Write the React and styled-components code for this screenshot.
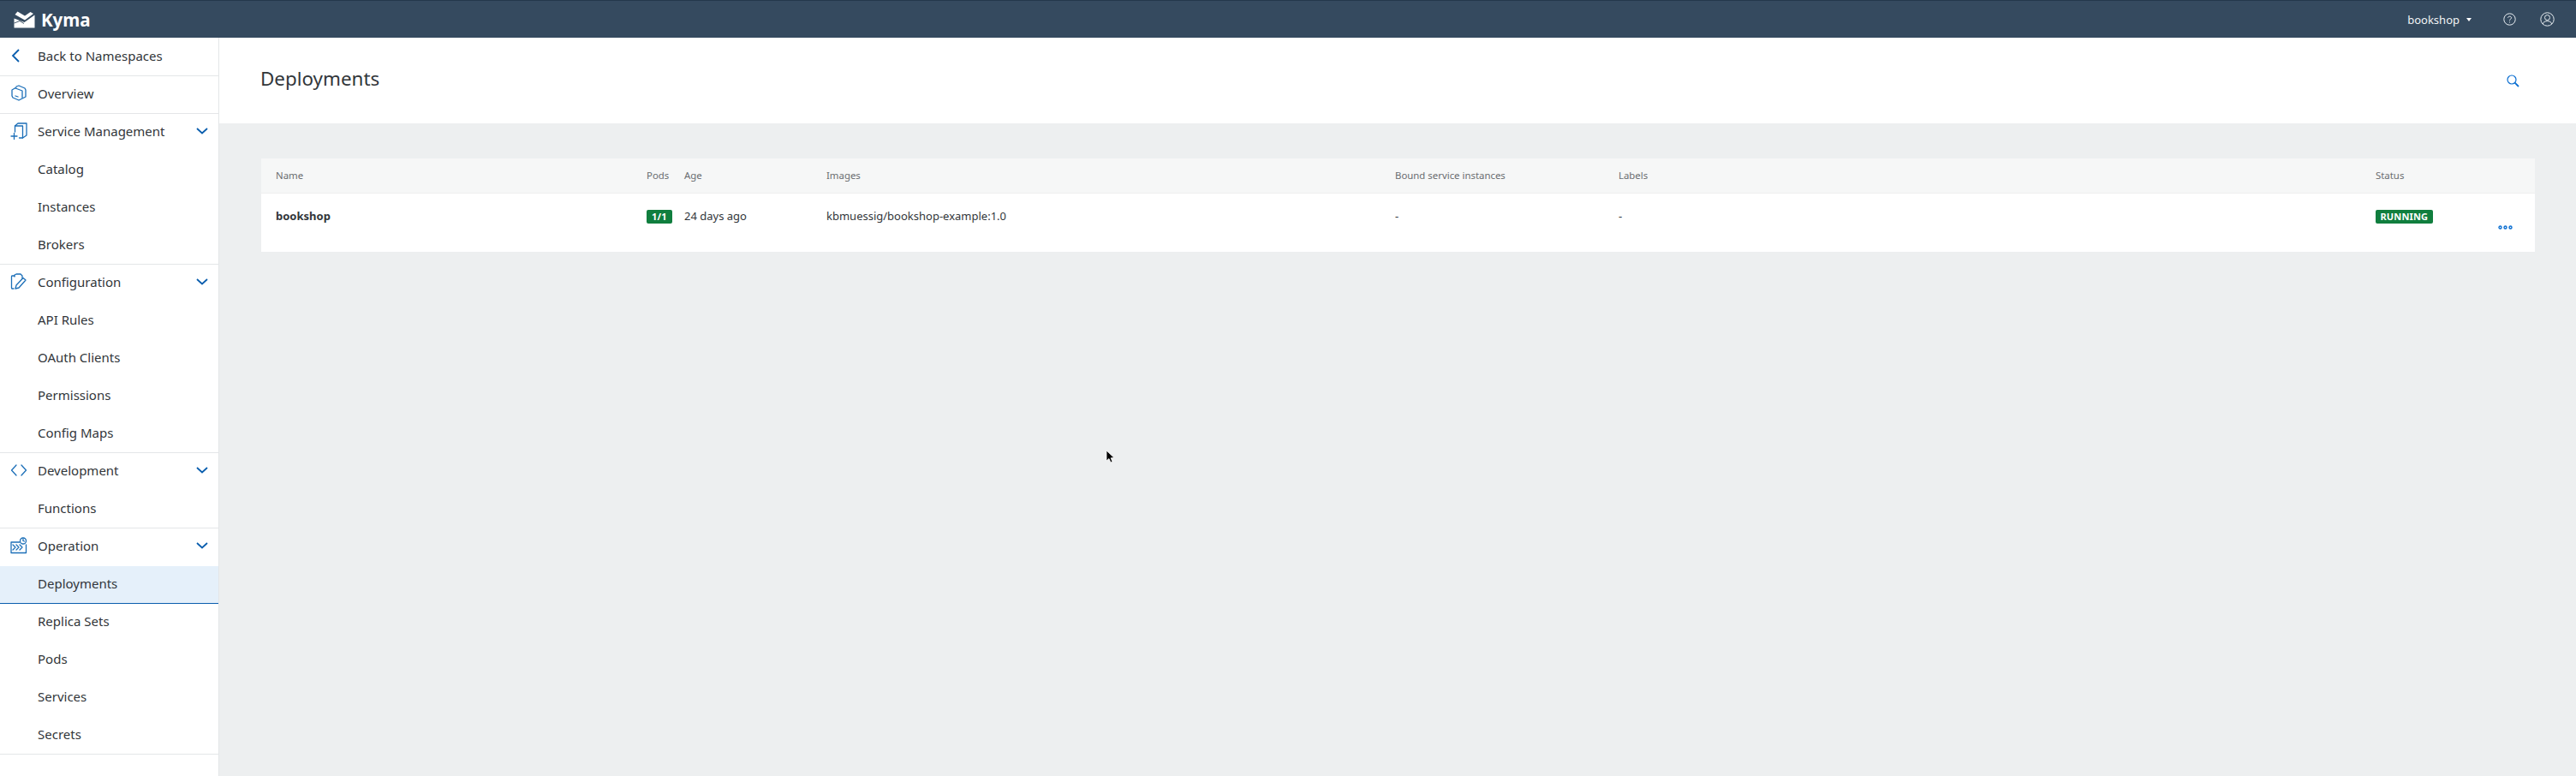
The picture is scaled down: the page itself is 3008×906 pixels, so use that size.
import React from "react";
import styled, { createGlobalStyle } from "styled-components";

const Global = createGlobalStyle`
  html, body { margin: 0; padding: 0; height: 100%; overflow: hidden; background: #edeff0; }
  * { box-sizing: border-box; }
  body { font-family: "Noto Sans", "Open Sans", Arial, sans-serif; color: #32363a; }
`;

const Page = styled.div`
  position: relative;
  display: flex;
  flex-direction: column;
  width: 3008px;
  height: 906px;
  overflow: hidden;
`;
const Shell = styled.header`
  flex: 0 0 44px;
  display: flex;
  align-items: center;
  padding-left: 16px;
  background: #354a5f;
  border-top: 1px solid #24384b;
  color: #fff;
`;
const Brand = styled.div`
  display: flex;
  align-items: center;
  gap: 7px;
  font-size: 20.5px;
  font-weight: 700;
`;
const ShellActions = styled.div`
  margin-left: auto;
  display: flex;
  align-items: center;
  padding-right: 25px;
`;
const NamespaceName = styled.span`
  font-size: 13px;
  color: #f0f3f5;
`;
const Caret = styled.span`
  width: 0;
  height: 0;
  margin: 0 37px 0 8px;
  border-left: 3.5px solid transparent;
  border-right: 3.5px solid transparent;
  border-top: 4px solid #fff;
`;
const ShellIcon = styled.span`
  display: flex;
  margin-left: ${(p) => p.$gap || 0}px;
`;
const Body = styled.div`
  flex: 1;
  display: flex;
  min-height: 0;
`;
const Sidebar = styled.nav`
  flex: 0 0 256px;
  background: #fff;
  border-right: 1px solid #e4e6e8;
  padding-top: 1px;
`;
const NavRow = styled.div`
  height: 44px;
  display: flex;
  align-items: center;
  padding: 0 0 4px 44px;
  position: relative;
  font-size: 15px;
  color: #32363a;
  background: ${(p) => (p.$active ? "#e5f0fa" : "transparent")};
  border-bottom: 1px solid
    ${(p) => (p.$active ? "#0a5eae" : p.$last ? "#e4e6e8" : "transparent")};
`;
const NavIcon = styled.span`
  position: absolute;
  left: 12px;
  top: calc(50% - 2px);
  transform: translateY(-50%);
  display: flex;
`;
const Chevron = styled.span`
  position: absolute;
  right: 12px;
  top: calc(50% - 2px);
  transform: translateY(-50%);
  display: flex;
`;
const Main = styled.main`
  flex: 1;
  display: flex;
  flex-direction: column;
`;
const PageHead = styled.div`
  height: 100px;
  display: flex;
  align-items: center;
  justify-content: space-between;
  padding: 0 66px 0 48px;
  background: #fff;
`;
const Title = styled.h1`
  margin: 0 0 6px;
  font-size: 22.4px;
  font-weight: 400;
  color: #32363a;
`;
const Content = styled.section`
  padding: 41px 48px 0 49px;
`;
const Table = styled.div`
  background: #fff;
  width: 2655px;
`;
const Grid = styled.div`
  display: grid;
  grid-template-columns: 433px 44px 166px 664px 261px 884px 1fr;
  padding-left: 17px;
`;
const HeadRow = styled(Grid)`
  height: 41px;
  align-items: center;
  background: #f6f7f7;
  border-bottom: 1px solid #eeeeef;
  font-size: 11.4px;
  color: #6a6d70;
`;
const DataRow = styled(Grid)`
  height: 68px;
  padding-top: 17px;
  position: relative;
  font-size: 13px;
  color: #32363a;
`;
const Strong = styled.span`
  font-weight: 700;
`;
const Badge = styled.span`
  display: inline-block;
  height: 16px;
  line-height: 16px;
  padding: 0 ${(p) => p.$pad}px;
  border-radius: 2px;
  background: #107e3e;
  color: #fff;
  font-size: 11px;
  font-weight: 700;
  letter-spacing: 0.15px;
`;
const Cell = styled.div`
  line-height: 18px;
  white-space: nowrap;
`;
const Dots = styled.span`
  position: absolute;
  right: 26px;
  top: 37px;
  display: flex;
`;
const Cursor = styled.span`
  position: absolute;
  left: 1291px;
  top: 525px;
  display: flex;
`;

const Blue = "#0a5eae";
const stroke = { fill: "none", stroke: "#1c6fb8", strokeWidth: 1.3, strokeLinejoin: "round", strokeLinecap: "round" };

const Logo = () => (
  <svg width="25" height="20" viewBox="0 0 25 20">
    <path fill="#fff" d="M0.5 8.5 L12.5 13 L24.5 4.5 V19.5 H0.5 Z" />
    <path fill="#fff" d="M1.5 4 L4.5 0.5 L13 5.5 L19.5 1 L23 3 L13 10.5 Z" />
    <path fill="none" stroke="#354a5f" strokeWidth="0.9" d="M0.5 14 L7 11.5 L12 14.5" />
  </svg>
);
const BackChevron = () => (
  <svg width="12" height="18" viewBox="0 0 12 18">
    <path d="M10 2 L3 9 L10 16" fill="none" stroke={Blue} strokeWidth="1.8" />
  </svg>
);
const Down = () => (
  <svg width="14" height="9" viewBox="0 0 14 9">
    <path d="M1 1.5 L7 7 L13 1.5" fill="none" stroke={Blue} strokeWidth="1.8" />
  </svg>
);
const Overview = () => (
  <svg width="20" height="20" viewBox="0 0 20 20" {...stroke}>
    <path d="M7 2 L10 1 L17 4 L18 6 V14 L10 18 L3 15 L2 13 V6 L7 3" />
    <path d="M6 4 L14 7 V15" />
    <path d="M6 13 L9 14" />
  </svg>
);
const Service = () => (
  <svg width="20" height="22" viewBox="0 0 20 22" {...stroke}>
    <path d="M5.5 12 V5 H14.5 V19 H10.5" />
    <path d="M5.5 5 L9 2 H19 V16 L14.5 19" />
    <path d="M1 17 H8 M4.5 13.5 V20.5" />
  </svg>
);
const Config = () => (
  <svg width="20" height="20" viewBox="0 0 20 20" {...stroke}>
    <path d="M5 3 H2 Q1.5 3 1.5 4 V17 Q1.5 18 2 18 H4" />
    <path d="M5 4 V2 L7 1 H12 L14 3 V6" />
    <path d="M6 18 L7 14 L15 5.5 L18 8 L10 17 Z" />
  </svg>
);
const Code = () => (
  <svg width="20" height="16" viewBox="0 0 20 16" {...stroke}>
    <path d="M7 2 L1.5 8 L7 14" />
    <path d="M13 2 L18.5 8 L13 14" />
  </svg>
);
const Operation = () => (
  <svg width="20" height="20" viewBox="0 0 20 20" {...stroke}>
    <path d="M11 6 H1 V18.5 H18.5 V9" />
    <path d="M3 9 L6 12 L3 15 M7 9 L10 12 L7 15 M11 9 L14 12 L11 15" />
    <circle cx="15" cy="4.5" r="3.5" />
    <path d="M15 2.5 V4.5 L16.5 5" />
  </svg>
);
const Help = () => (
  <svg width="15" height="15" viewBox="0 0 15 15" fill="none" stroke="#e8edf1" strokeWidth="1">
    <circle cx="7.5" cy="7.5" r="6.7" />
    <path d="M5.5 5.8 C5.5 3.6 9.6 3.6 9.6 5.8 C9.6 7.2 7.5 7.2 7.5 9" />
    <path d="M7.5 10.4 V11.4" />
  </svg>
);
const User = () => (
  <svg width="17" height="17" viewBox="0 0 17 17" fill="none" stroke="#e8edf1" strokeWidth="1">
    <circle cx="8.5" cy="8.5" r="7.7" />
    <circle cx="8.5" cy="6.5" r="3" />
    <path d="M3.3 14 C4 9.5 13 9.5 13.7 14" />
  </svg>
);
const Search = () => (
  <svg width="15" height="15" viewBox="0 0 15 15" fill="none" stroke="#0a6ed1" strokeWidth="1.2">
    <circle cx="6" cy="6" r="5" />
    <path d="M9.6 9.6 L14 14" strokeWidth="1.8" />
  </svg>
);
const More = () => (
  <svg width="17" height="5" viewBox="0 0 17 5" fill="none" stroke="#0a6ed1" strokeWidth="1.4">
    <circle cx="2.5" cy="2.5" r="1.5" />
    <circle cx="8.5" cy="2.5" r="1.5" />
    <circle cx="14.5" cy="2.5" r="1.5" />
  </svg>
);
const Arrow = () => (
  <svg width="12" height="17" viewBox="0 0 12 17">
    <path d="M1 1 V13 L4 10.5 L6 15 L8 14 L6.2 9.8 L10 9.5 Z" fill="#000" stroke="#fff" strokeWidth="0.8" />
  </svg>
);

const nav = [
  { label: "Back to Namespaces", icon: <BackChevron />, last: true },
  { label: "Overview", icon: <Overview />, last: true },
  { label: "Service Management", icon: <Service />, open: true },
  { label: "Catalog" },
  { label: "Instances" },
  { label: "Brokers", last: true },
  { label: "Configuration", icon: <Config />, open: true },
  { label: "API Rules" },
  { label: "OAuth Clients" },
  { label: "Permissions" },
  { label: "Config Maps", last: true },
  { label: "Development", icon: <Code />, open: true },
  { label: "Functions", last: true },
  { label: "Operation", icon: <Operation />, open: true },
  { label: "Deployments", active: true },
  { label: "Replica Sets" },
  { label: "Pods" },
  { label: "Services" },
  { label: "Secrets", last: true },
];

export default function App() {
  return (
    <Page>
      <Global />
      <Shell>
        <Brand>
          <Logo />
          <span>Kyma</span>
        </Brand>
        <ShellActions>
          <NamespaceName>bookshop</NamespaceName>
          <Caret />
          <ShellIcon><Help /></ShellIcon>
          <ShellIcon $gap={28}><User /></ShellIcon>
        </ShellActions>
      </Shell>
      <Body>
        <Sidebar>
          {nav.map((n) => (
            <NavRow key={n.label} $last={n.last} $active={n.active}>
              {n.icon && <NavIcon>{n.icon}</NavIcon>}
              {n.label}
              {n.open && <Chevron><Down /></Chevron>}
            </NavRow>
          ))}
        </Sidebar>
        <Main>
          <PageHead>
            <Title>Deployments</Title>
            <Search />
          </PageHead>
          <Content>
            <Table>
              <HeadRow>
                <Cell>Name</Cell>
                <Cell>Pods</Cell>
                <Cell>Age</Cell>
                <Cell>Images</Cell>
                <Cell>Bound service instances</Cell>
                <Cell>Labels</Cell>
                <Cell>Status</Cell>
              </HeadRow>
              <DataRow>
                <Cell><Strong>bookshop</Strong></Cell>
                <Cell><Badge $pad={6}>1/1</Badge></Cell>
                <Cell>24 days ago</Cell>
                <Cell>kbmuessig/bookshop-example:1.0</Cell>
                <Cell>-</Cell>
                <Cell>-</Cell>
                <Cell><Badge $pad={5.5}>RUNNING</Badge></Cell>
                <Dots><More /></Dots>
              </DataRow>
            </Table>
          </Content>
        </Main>
      </Body>
      <Cursor><Arrow /></Cursor>
    </Page>
  );
}
